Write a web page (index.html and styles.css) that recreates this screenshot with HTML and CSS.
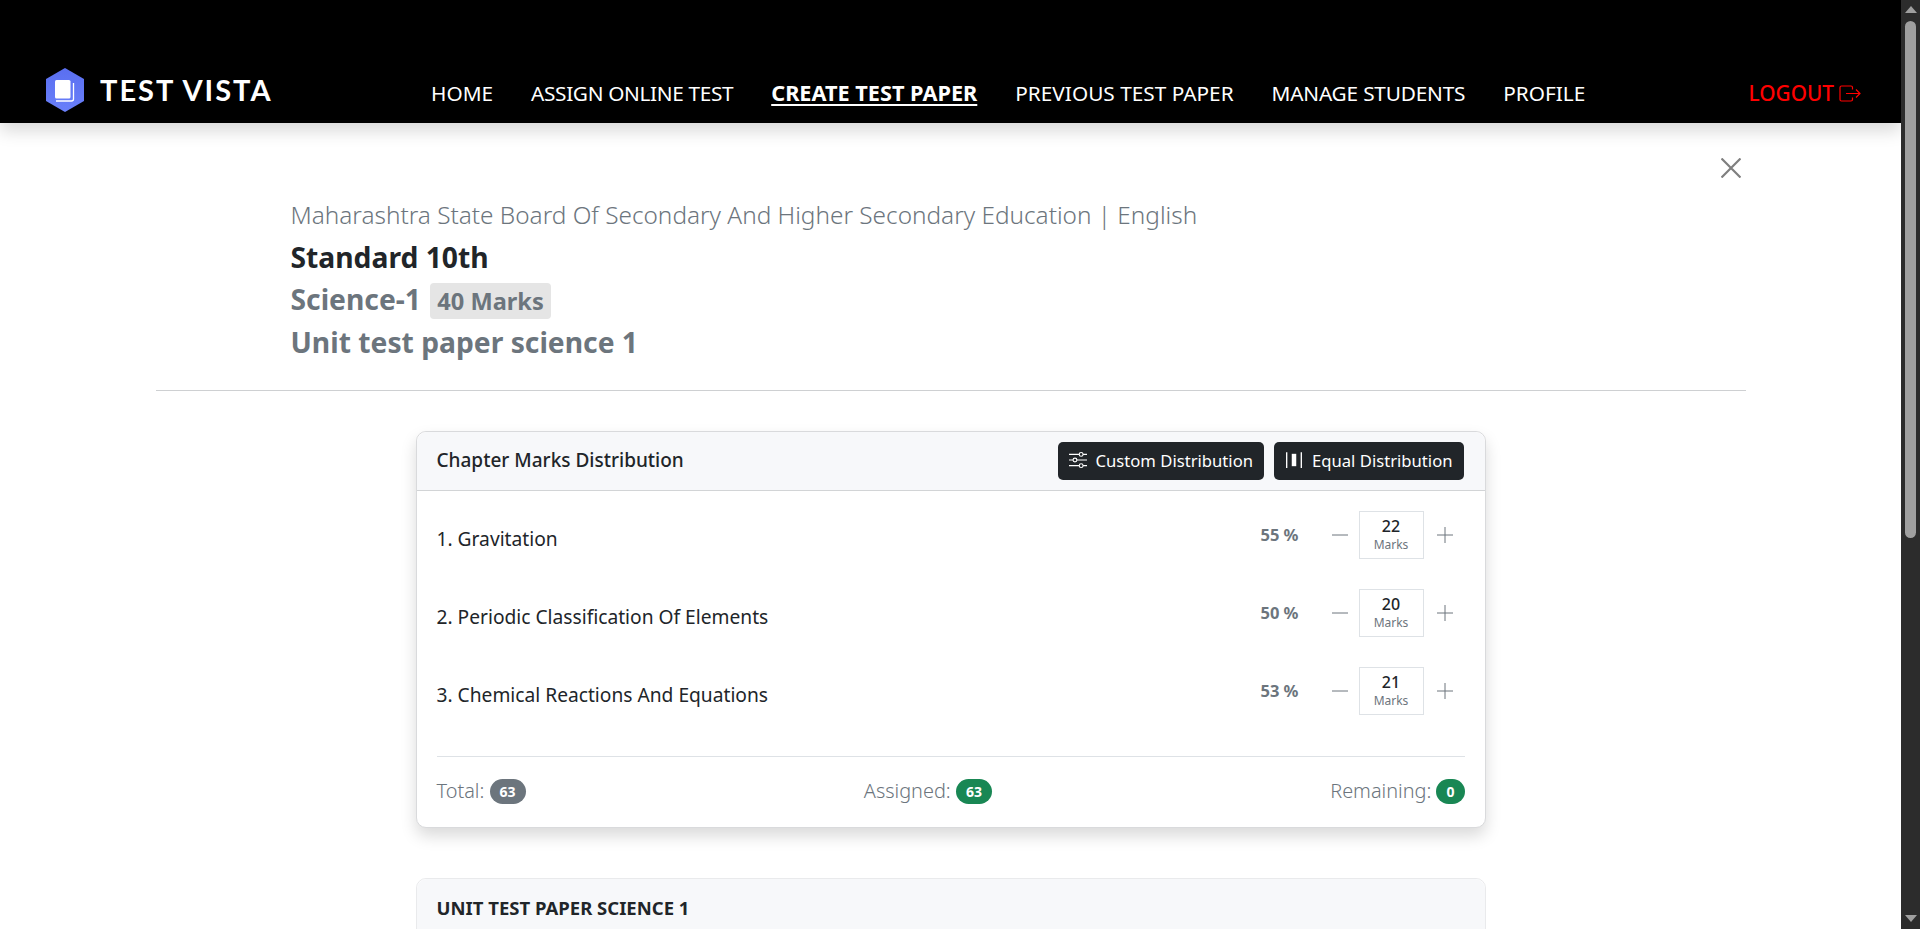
FILE: index.html
```html
<!DOCTYPE html>
<html lang="en">
<head>
<meta charset="utf-8">
<title>Test Vista</title>
<link rel="stylesheet" href="styles.css">
</head>
<body>
<div class="app">
<div class="viewport">
<header class="topbar">
  <a class="brand" href="#">
    <svg class="brand-icon" viewBox="0 0 40 44" aria-hidden="true">
      <defs><linearGradient id="hex" x1="0" y1="0" x2="0" y2="1"><stop offset="0" stop-color="#5a6ff0"/><stop offset="1" stop-color="#6a80fa"/></linearGradient></defs>
      <path d="M20 0 39 11V33L20 44 1 33V11Z" fill="url(#hex)"/>
      <path d="M10 13.500a1.500 1.500 0 0 1 1.500-1.500H24a1.500 1.500 0 0 1 1.500 1.500V29a1.500 1.500 0 0 1-1.500 1.500H11.500A1.500 1.500 0 0 1 10 29Z" fill="#fff"/>
      <path d="M28.500 15V31a2 2 0 0 1-2 2H11" fill="none" stroke="#fff" stroke-width="1.300"/>
    </svg>
    <span class="brand-name">TEST VISTA</span>
  </a>
  <nav class="nav">
    <a href="#">HOME</a>
    <a class="tight" href="#">ASSIGN ONLINE TEST</a>
    <a class="active" href="#">CREATE TEST PAPER</a>
    <a href="#">PREVIOUS TEST PAPER</a>
    <a class="snug" href="#">MANAGE STUDENTS</a>
    <a href="#">PROFILE</a>
  </nav>
  <a class="logout" href="#">LOGOUT
    <svg viewBox="0 0 22 17" aria-hidden="true"><path d="M13.500 4.500V2.500a1.500 1.500 0 0 0-1.500-1.500H2.500A1.500 1.500 0 0 0 1 2.500v12A1.500 1.500 0 0 0 2.500 16H12a1.500 1.500 0 0 0 1.500-1.500v-2M7 8.500h14M17 4.500l4 4-4 4" fill="none" stroke="currentColor" stroke-width="1.200"/></svg>
  </a>
</header>

<main class="page">
  <div class="close-row">
    <button class="close" aria-label="Close">
      <svg viewBox="0 0 20 20" aria-hidden="true"><path d="M.500.500 19.500 19.500M19.500.500 .500 19.500" stroke="#7f7f7f" stroke-width="2.200" fill="none"/></svg>
    </button>
  </div>
  <section class="intro">
    <p class="board">Maharashtra State Board Of Secondary And Higher Secondary Education | English</p>
    <h1 class="standard">Standard 10th</h1>
    <h2 class="subject">Science-1 <span class="marks-tag">40 Marks</span></h2>
    <h2 class="subject">Unit test paper science 1</h2>
  </section>
  <hr class="rule">

  <section class="card dist">
    <div class="card-head">
      <span class="card-title">Chapter Marks Distribution</span>
      <div class="head-actions">
        <button class="btn">
          <svg viewBox="0 0 16 16" aria-hidden="true"><g fill="none" stroke="currentColor" stroke-width="1"><path d="M0 3h9M12.500 3H16M0 8h3.500M7 8h9M0 13h9M12.500 13H16"/><circle cx="10.800" cy="3" r="1.700"/><circle cx="5.300" cy="8" r="1.700"/><circle cx="10.800" cy="13" r="1.700"/></g></svg>
          Custom Distribution
        </button>
        <button class="btn">
          <svg viewBox="0 0 16 16" aria-hidden="true"><path d="M1.500 1v14M14.500 1v14" stroke="currentColor" stroke-width="1.200"/><rect x="6" y="2.500" width="4" height="11" fill="currentColor"/></svg>
          Equal Distribution
        </button>
      </div>
    </div>
    <div class="card-body">
      <div class="row">
        <span class="chapter">1. Gravitation</span>
        <span class="pct">55 %</span>
        <button class="step" aria-label="Decrease"><svg viewBox="0 0 16 16"><path d="M0 8h16"/></svg></button>
        <div class="marks-box"><b>22</b><small>Marks</small></div>
        <button class="step" aria-label="Increase"><svg viewBox="0 0 16 16"><path d="M0 8h16M8 0v16"/></svg></button>
      </div>
      <div class="row">
        <span class="chapter">2. Periodic Classification Of Elements</span>
        <span class="pct">50 %</span>
        <button class="step" aria-label="Decrease"><svg viewBox="0 0 16 16"><path d="M0 8h16"/></svg></button>
        <div class="marks-box"><b>20</b><small>Marks</small></div>
        <button class="step" aria-label="Increase"><svg viewBox="0 0 16 16"><path d="M0 8h16M8 0v16"/></svg></button>
      </div>
      <div class="row">
        <span class="chapter">3. Chemical Reactions And Equations</span>
        <span class="pct">53 %</span>
        <button class="step" aria-label="Decrease"><svg viewBox="0 0 16 16"><path d="M0 8h16"/></svg></button>
        <div class="marks-box"><b>21</b><small>Marks</small></div>
        <button class="step" aria-label="Increase"><svg viewBox="0 0 16 16"><path d="M0 8h16M8 0v16"/></svg></button>
      </div>
      <div class="totals">
        <span>Total: <em class="badge grey">63</em></span>
        <span>Assigned: <em class="badge green">63</em></span>
        <span>Remaining: <em class="badge green">0</em></span>
      </div>
    </div>
  </section>

  <section class="card paper">
    <div class="card-head paper-head">
      <span class="paper-title">UNIT TEST PAPER SCIENCE 1</span>
    </div>
  </section>
</main>
</div>
<div class="scrollbar" aria-hidden="true">
  <span class="arrow up"></span>
  <span class="thumb"></span>
  <span class="arrow down"></span>
</div>
</div>
</body>
</html>
```
FILE: styles.css
```css
* { box-sizing: border-box; }
body { margin: 0; background: #fff; color: #212529; font-family: "Noto Sans", "Open Sans", sans-serif; }
a { text-decoration: none; color: inherit; }
button { font: inherit; border: 0; background: none; padding: 0; }
p, h1, h2 { margin: 0; font-weight: inherit; }
em { font-style: normal; }

.app { display: flex; height: 100vh; overflow: hidden; }
.viewport { flex: 1; min-width: 0; overflow-y: auto; scrollbar-width: none; }
.scrollbar { width: 19px; flex: none; background: #2c2c2c; display: flex; flex-direction: column; align-items: center; padding: 6px 0 7px; }
.arrow { width: 0; height: 0; border-left: 6.500px solid transparent; border-right: 6.500px solid transparent; }
.arrow.up { border-bottom: 7px solid #9f9f9f; }
.arrow.down { border-top: 7px solid #9f9f9f; margin-top: auto; }
.thumb { width: 11px; height: 517px; margin-top: 8px; background: #9f9f9f; border-radius: 6px; }

.topbar { height: 123px; background: #000; color: #fff; display: flex; align-items: flex-end; padding: 0 40px 15px 45px; box-shadow: 0 8px 16px rgba(0,0,0,.15); position: relative; }
.brand { display: flex; align-items: center; gap: 15px; width: 386px; height: 44px; margin-bottom: -4px; }
.brand-icon { width: 40px; height: 44px; flex: none; }
.brand-name { font-family: "Lato", sans-serif; font-weight: 700; font-size: 29px; letter-spacing: 2px; position: relative; top: -1px; }
.nav { display: flex; gap: 38px; font-size: 20.800px; line-height: 30px; flex: 1; }
.nav .tight { letter-spacing: -.35px; }
.nav .snug { letter-spacing: -.2px; }
.nav .active { font-weight: 700; font-size: 21.700px; text-decoration: underline; text-decoration-thickness: 2px; text-underline-offset: 3px; }
.logout { display: flex; align-items: center; gap: 5px; color: #f00; font-size: 20.800px; line-height: 30px; font-weight: 500; }
.logout svg { width: 22px; height: 17px; }

.page { width: 1590px; margin: 0 auto; padding-bottom: 700px; }
.close-row { display: flex; justify-content: flex-end; padding: 34px 3px 0 0; height: 56px; }
.close { width: 22px; height: 22px; }
.close svg { width: 20px; height: 20px; display: block; }
.intro { padding: 15px 0 0 135px; }
.board { font-size: 24.350px; line-height: 42px; color: #6c757d; font-weight: 300; }
.standard { font-size: 28.250px; line-height: 42px; font-weight: 700; color: #212529; }
.subject { font-size: 28.250px; line-height: 42px; font-weight: 700; color: #6c757d; }
.subject:last-child { margin-top: -1px; }
.marks-tag { font-size: 23.600px; background: #e5e5e5; margin-left: 2px; padding: 2px 7px; border-radius: 4px; }
.rule { border: 0; border-top: 1px solid #ced0d2; margin: 27px 0 0; }

.card { width: 1070px; margin: 40px auto 0; border: 1px solid #d9dadc; border-radius: 10px; background: #fff; box-shadow: 0 8px 16px rgba(0,0,0,.15); }
.card-head { height: 59px; background: #f7f8fa; border-bottom: 1px solid #d2d4d6; border-radius: 10px 10px 0 0; display: flex; align-items: center; justify-content: space-between; padding: 0 21px 0 20px; }
.card-title { font-size: 19px; font-weight: 500; position: relative; top: -1px; }
.head-actions { display: flex; gap: 10px; }
.btn { height: 38px; background: #212529; color: #fff; border-radius: 5px; font-size: 16.650px; display: flex; align-items: center; gap: 9px; padding: 0 11px 2px; }
.btn svg { width: 18px; height: 18px; }
.card-body { padding: 20px 20px 23px; }
.row { display: flex; align-items: center; height: 48px; margin-bottom: 30px; }
.chapter { font-size: 19.200px; flex: 1; position: relative; top: 3px; }
.pct { font-size: 16.500px; font-weight: 700; color: #6c757d; margin-right: 33px; position: relative; top: -1px; }
.step { width: 16px; height: 16px; display: flex; }
.step svg { width: 16px; height: 16px; fill: none; stroke: #6c757d; stroke-width: 1; }
.step:last-child { margin-right: 12px; }
.marks-box { width: 65px; height: 48px; border: 1px solid #dee2e6; margin: 0 13px 0 11px; padding-top: 3px; display: flex; flex-direction: column; align-items: center; }
.marks-box b { font-size: 16px; font-weight: 500; line-height: 22px; color: #212529; }
.marks-box small { font-size: 12px; line-height: 16px; color: #6c757d; }
.totals { margin-top: 41px; border-top: 1px solid #dee2e6; display: flex; justify-content: space-between; align-items: center; padding-top: 20px; font-size: 19.900px; font-weight: 300; color: #6c757d; }
.badge { display: inline-block; min-width: 28px; height: 25px; line-height: 25px; text-align: center; padding: 0 10px; border-radius: 13px; color: #fff; font-size: 14px; font-weight: 700; vertical-align: 1px; }
.grey { background: #6c757d; }
.green { background: #198754; }
.paper { margin-top: 50px; box-shadow: none; height: 600px; border-color: #e9eaec; }
.paper-head { border-bottom: 0; height: 57px; }
.paper-title { font-size: 18.500px; font-weight: 700; }
```
